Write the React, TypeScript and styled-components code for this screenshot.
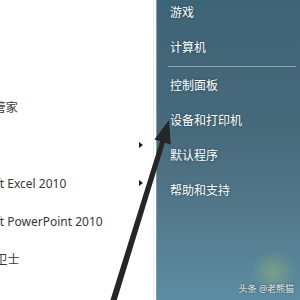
import React from "react";
import styled, { createGlobalStyle } from "styled-components";

const Global = createGlobalStyle`
  html, body {
    margin: 0;
    padding: 0;
    width: 300px;
    height: 300px;
    overflow: hidden;
    background: #fff;
  }
`;

const Frame = styled.div`
  position: relative;
  width: 300px;
  height: 300px;
  display: flex;
  overflow: hidden;
  font-family: "Noto Sans", "Noto Sans CJK SC", sans-serif;
`;

const ProgramPane = styled.div`
  width: 153px;
  flex: none;
  background: #fff;
  border-right: 1px solid #ededed;
  padding-top: 12px;
  overflow: hidden;
`;

const ProgramRow = styled.div`
  height: 38px;
  display: flex;
  align-items: center;
  padding-right: 10px;
`;

const ProgramLabel = styled.span`
  flex: 1;
  margin-left: -49px;
  font-size: 12px;
  color: #383838;
  white-space: nowrap;
`;

const SubArrow = styled.span<{ $show: boolean }>`
  width: 0;
  height: 0;
  border-top: 3.5px solid transparent;
  border-bottom: 3.5px solid transparent;
  border-left: 4px solid ${({ $show }) => ($show ? "#1a1a1a" : "transparent")};
`;

const Gap = styled.div`
  width: 2px;
  flex: none;
  background: #fff;
`;

const PlacesPane = styled.div`
  position: relative;
  flex: 1;
  border-left: 1px solid #7f9aa8;
  background:
    radial-gradient(circle at 116px 272px, rgba(160, 190, 110, 0.45) 0, rgba(160, 190, 110, 0) 22px),
    linear-gradient(180deg, #3e6477 0%, #486b7c 45%, #52788a 70%, #5d8da3 100%);
  padding-left: 13px;
  padding-right: 4px;
`;

const PlacesList = styled.div`
  margin-top: -5px;
`;

const Place = styled.div`
  height: 35px;
  line-height: 35px;
  font-size: 12px;
  color: #ffffff;
  text-shadow: 0 0 3px rgba(20, 40, 50, 0.6);
  white-space: nowrap;
`;

const Divider = styled.div`
  height: 1px;
  margin: 1px 0 1px -2px;
  background: rgba(200, 215, 222, 0.55);
`;

const Watermark = styled.div`
  position: absolute;
  right: 6px;
  bottom: 5px;
  font-size: 9px;
  color: #eef2f4;
  text-shadow: 0 0 2px rgba(0, 0, 0, 0.7);
  white-space: nowrap;
`;

const Pointer = styled.svg`
  position: absolute;
  left: 0;
  top: 0;
  pointer-events: none;
`;

const programs = [
  { name: "", sub: false },
  { name: "", sub: false },
  { name: "QQ电脑管家", sub: false },
  { name: "", sub: true },
  { name: "Microsoft Excel 2010", sub: true },
  { name: "Microsoft PowerPoint 2010", sub: false },
  { name: "360安全卫士", sub: false },
  { name: "", sub: false },
];

const places = ["游戏", "计算机", "-", "控制面板", "设备和打印机", "默认程序", "帮助和支持"];

export default function App() {
  return (
    <Frame>
      <Global />
      <ProgramPane>
        {programs.map((p, i) => (
          <ProgramRow key={i}>
            <ProgramLabel>{p.name}</ProgramLabel>
            <SubArrow $show={p.sub} />
          </ProgramRow>
        ))}
      </ProgramPane>
      <Gap />
      <PlacesPane>
        <PlacesList>
          {places.map((p, i) =>
            p === "-" ? <Divider key={i} /> : <Place key={i}>{p}</Place>
          )}
        </PlacesList>
        <Watermark>头条 @老熊猫</Watermark>
      </PlacesPane>
      <Pointer width="300" height="300" viewBox="0 0 300 300">
        <polygon
          points="110.1,301.1 160.1,141.3 154.4,139.4 169,120 170.8,144.6 164.9,142.7 115.9,302.9"
          fill="#262626"
        />
      </Pointer>
    </Frame>
  );
}
